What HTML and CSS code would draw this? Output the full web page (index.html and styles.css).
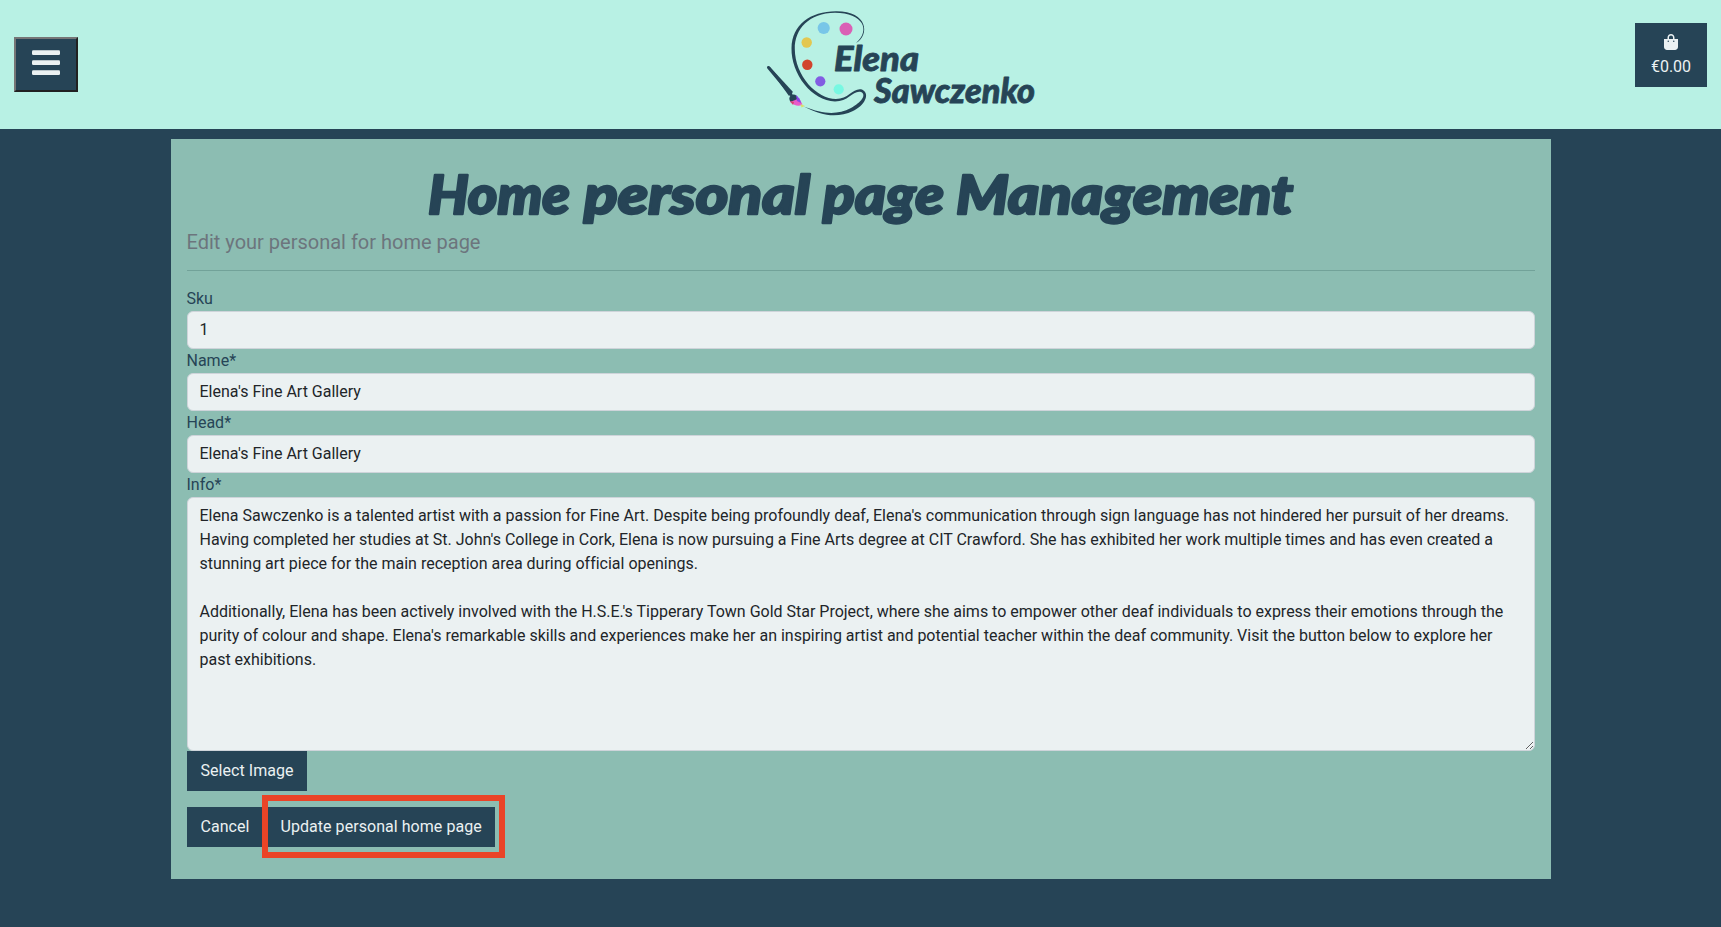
FILE: index.html
```
<!DOCTYPE html>
<html lang="en">
<head>
<meta charset="utf-8">
<title>Home personal page Management</title>
<link rel="stylesheet" href="styles.css">
</head>
<body>
<header class="site-header">
  <button class="menu-btn" aria-label="Menu">
    <svg width="28" height="26" viewBox="0 0 28 26"><rect x="0" y="0.300" width="28" height="4.700" rx="1.3"/><rect x="0" y="10.300" width="28" height="4.700" rx="1.3"/><rect x="0" y="20.300" width="28" height="4.700" rx="1.3"/></svg>
  </button>
  <svg class="logo" width="290" height="129" viewBox="0 0 290 129">
    <g class="palette">
      <path d="M101 43 C116 30 108 12.700 80 12.700 C54 13 39.500 29 39.800 49 C40 76 62 99 81 99 C94 99 98 87.500 107 89.500 C116 94 109 106 98 111 C83 118 67 116.500 49 106.500 C69 114.500 82 115 96 108 C106 102.500 112 95 106 92 C98 90 94 101.500 80 101.500 C57 101 36 74 36.500 48 C37 25 55 11.200 81 11.200 C113 11 115 35 101 43Z"/>
      <path class="handle" d="M13.500 67.500 L36 94.500"/>
      <path d="M12.500 66 L15 67 L38 92 L34 96Z"/>
    </g>
    <circle cx="38.500" cy="98.800" r="4.200" fill="#264456"/>
    <path d="M35 102 Q41 100 44 98 L47.500 104.500 Q42 108 35 102Z" fill="#e85bc8"/>
    <path d="M41 95 Q45 98 46 103 L42 101Z" fill="#8a45e8"/>
    <path d="M35 101 L38 105 L39 102Z" fill="#d6436c"/>
    <path d="M45.500 104 L50 106 L46.500 107.500Z" fill="#d9e06c"/>
    <circle cx="68.700" cy="28" r="6.100" fill="#78c6e8"/>
    <circle cx="91" cy="29" r="6.500" fill="#da60b5"/>
    <circle cx="51.700" cy="42.500" r="5.200" fill="#e3c750"/>
    <circle cx="52.300" cy="64.800" r="5.200" fill="#d1442d"/>
    <circle cx="65.300" cy="81.300" r="5.100" fill="#825de2"/>
    <circle cx="83.700" cy="89.300" r="5.100" fill="#78f8e2"/>
    <text class="brand" x="79" y="71" textLength="85" lengthAdjust="spacingAndGlyphs">Elena</text>
    <text class="brand" x="119" y="102.500" textLength="161" lengthAdjust="spacingAndGlyphs">Sawczenko</text>
  </svg>
  <a class="bag">
    <svg width="14" height="16" viewBox="0 0 448 512"><path d="M160 112c0-35.300 28.700-64 64-64s64 28.700 64 64v48H160V112zm-48 48H0V416c0 53 43 96 96 96H352c53 0 96-43 96-96V160H336V112C336 50.100 285.900 0 224 0S112 50.100 112 112v48zm24 48a24 24 0 1 1 0 48 24 24 0 1 1 0-48zm152 24a24 24 0 1 1 48 0 24 24 0 1 1-48 0z"/></svg>
    <span>€0.00</span>
  </a>
</header>
<main class="card">
  <h1 class="title">
    <svg width="1348" height="72" viewBox="0 0 1348 72">
      <text x="241" y="58.500" textLength="142" lengthAdjust="spacingAndGlyphs">Home</text>
      <text x="397" y="58.500" textLength="226" lengthAdjust="spacingAndGlyphs">personal</text>
      <text x="636" y="58.500" textLength="121" lengthAdjust="spacingAndGlyphs">page</text>
      <text x="769" y="58.500" textLength="337" lengthAdjust="spacingAndGlyphs">Management</text>
    </svg>
  </h1>
  <p class="lead">Edit your personal for home page</p>
  <hr class="rule">
  <form class="form">
    <label for="sku">Sku</label>
    <input id="sku" type="text" value="1">
    <label for="name">Name*</label>
    <input id="name" type="text" value="Elena's Fine Art Gallery">
    <label for="head">Head*</label>
    <input id="head" type="text" value="Elena's Fine Art Gallery">
    <label for="info">Info*</label>
    <textarea id="info" rows="10">Elena Sawczenko is a talented artist with a passion for Fine Art. Despite being profoundly deaf, Elena's communication through sign language has not hindered her pursuit of her dreams. Having completed her studies at St. John's College in Cork, Elena is now pursuing a Fine Arts degree at CIT Crawford. She has exhibited her work multiple times and has even created a stunning art piece for the main reception area during official openings.

Additionally, Elena has been actively involved with the H.S.E.'s Tipperary Town Gold Star Project, where she aims to empower other deaf individuals to express their emotions through the purity of colour and shape. Elena's remarkable skills and experiences make her an inspiring artist and potential teacher within the deaf community. Visit the button below to explore her past exhibitions.</textarea>
    <span class="btn select">Select Image</span>
    <div class="actions">
      <a class="btn cancel">Cancel</a>
      <span class="marked"><a class="btn update">Update personal home page</a></span>
    </div>
  </form>
</main>
</body>
</html>
```
FILE: styles.css
```
* { box-sizing: border-box; }
body { margin: 0; height: 927px; overflow: hidden; background: #264456; color: #264456; font: 16px/24px Roboto, sans-serif; }
.site-header { height: 129px; background: #b8f1e4; display: grid; grid-template-columns: 1fr 290px 1fr; padding: 0 14px; align-items: start; }
.menu-btn { width: 64px; height: 55px; margin-top: 37px; padding: 0 0 3px; background: #264456; border: 2px solid; border-color: #767676 #212121 #212121 #767676; display: flex; align-items: center; justify-content: center; }
.menu-btn svg { fill: #ebf1f2; }
.logo { display: block; margin-left: 39px; overflow: visible; }
.palette path { fill: #264456; }
.palette .handle { stroke: #264456; stroke-width: 3; stroke-linecap: round; }
.brand { font: italic 900 34px Lato, sans-serif; fill: #264456; stroke: #264456; stroke-width: 0.8; stroke-linejoin: round; }
.bag { justify-self: end; width: 72px; height: 64px; margin-top: 23px; background: #264456; color: #ebf1f2; display: flex; flex-direction: column; align-items: center; padding-top: 11px; }
.bag svg { fill: #ebf1f2; display: block; }
.bag span { margin-top: 5px; }
.card { width: 1380px; height: 740px; margin: 10px auto 0; background: #8cbdb2; padding: 16px; }
.title { margin: 0; height: 72px; }
.title svg { display: block; }
.title text { font: italic 900 54px Lato, sans-serif; fill: #264456; stroke: #264456; stroke-width: 2.4; stroke-linejoin: round; }
.lead { margin: 0; font-size: 20px; line-height: 30px; color: #6c757d; }
.rule { margin: 13px 0 16px; border: 0; height: 1px; background: #72a299; }
.form { display: flex; flex-direction: column; align-items: stretch; }
label { height: 24px; }
input, textarea { width: 100%; background: #ebf1f2; color: #212529; border: 1px solid #ced4da; border-radius: 6px; font: inherit; padding: 6px 12px; margin: 0; display: block; }
input { height: 38px; padding: 5px 12px 7px; }
textarea { height: 254px; resize: vertical; letter-spacing: -0.006px; }
.btn { display: block; height: 40px; padding: 8px 14px; background: #264456; color: #ebf1f2; white-space: nowrap; letter-spacing: 0.05px; }
.select { width: 120px; }
.actions { display: flex; margin-top: 16px; }
.cancel { width: 76px; }
.update { width: 227px; padding-left: 13px; }
.marked { margin: -12px 0 0 -1px; height: 63px; width: 243px; border: 6px solid #ea4427; padding: 6px 0 0; }
```
